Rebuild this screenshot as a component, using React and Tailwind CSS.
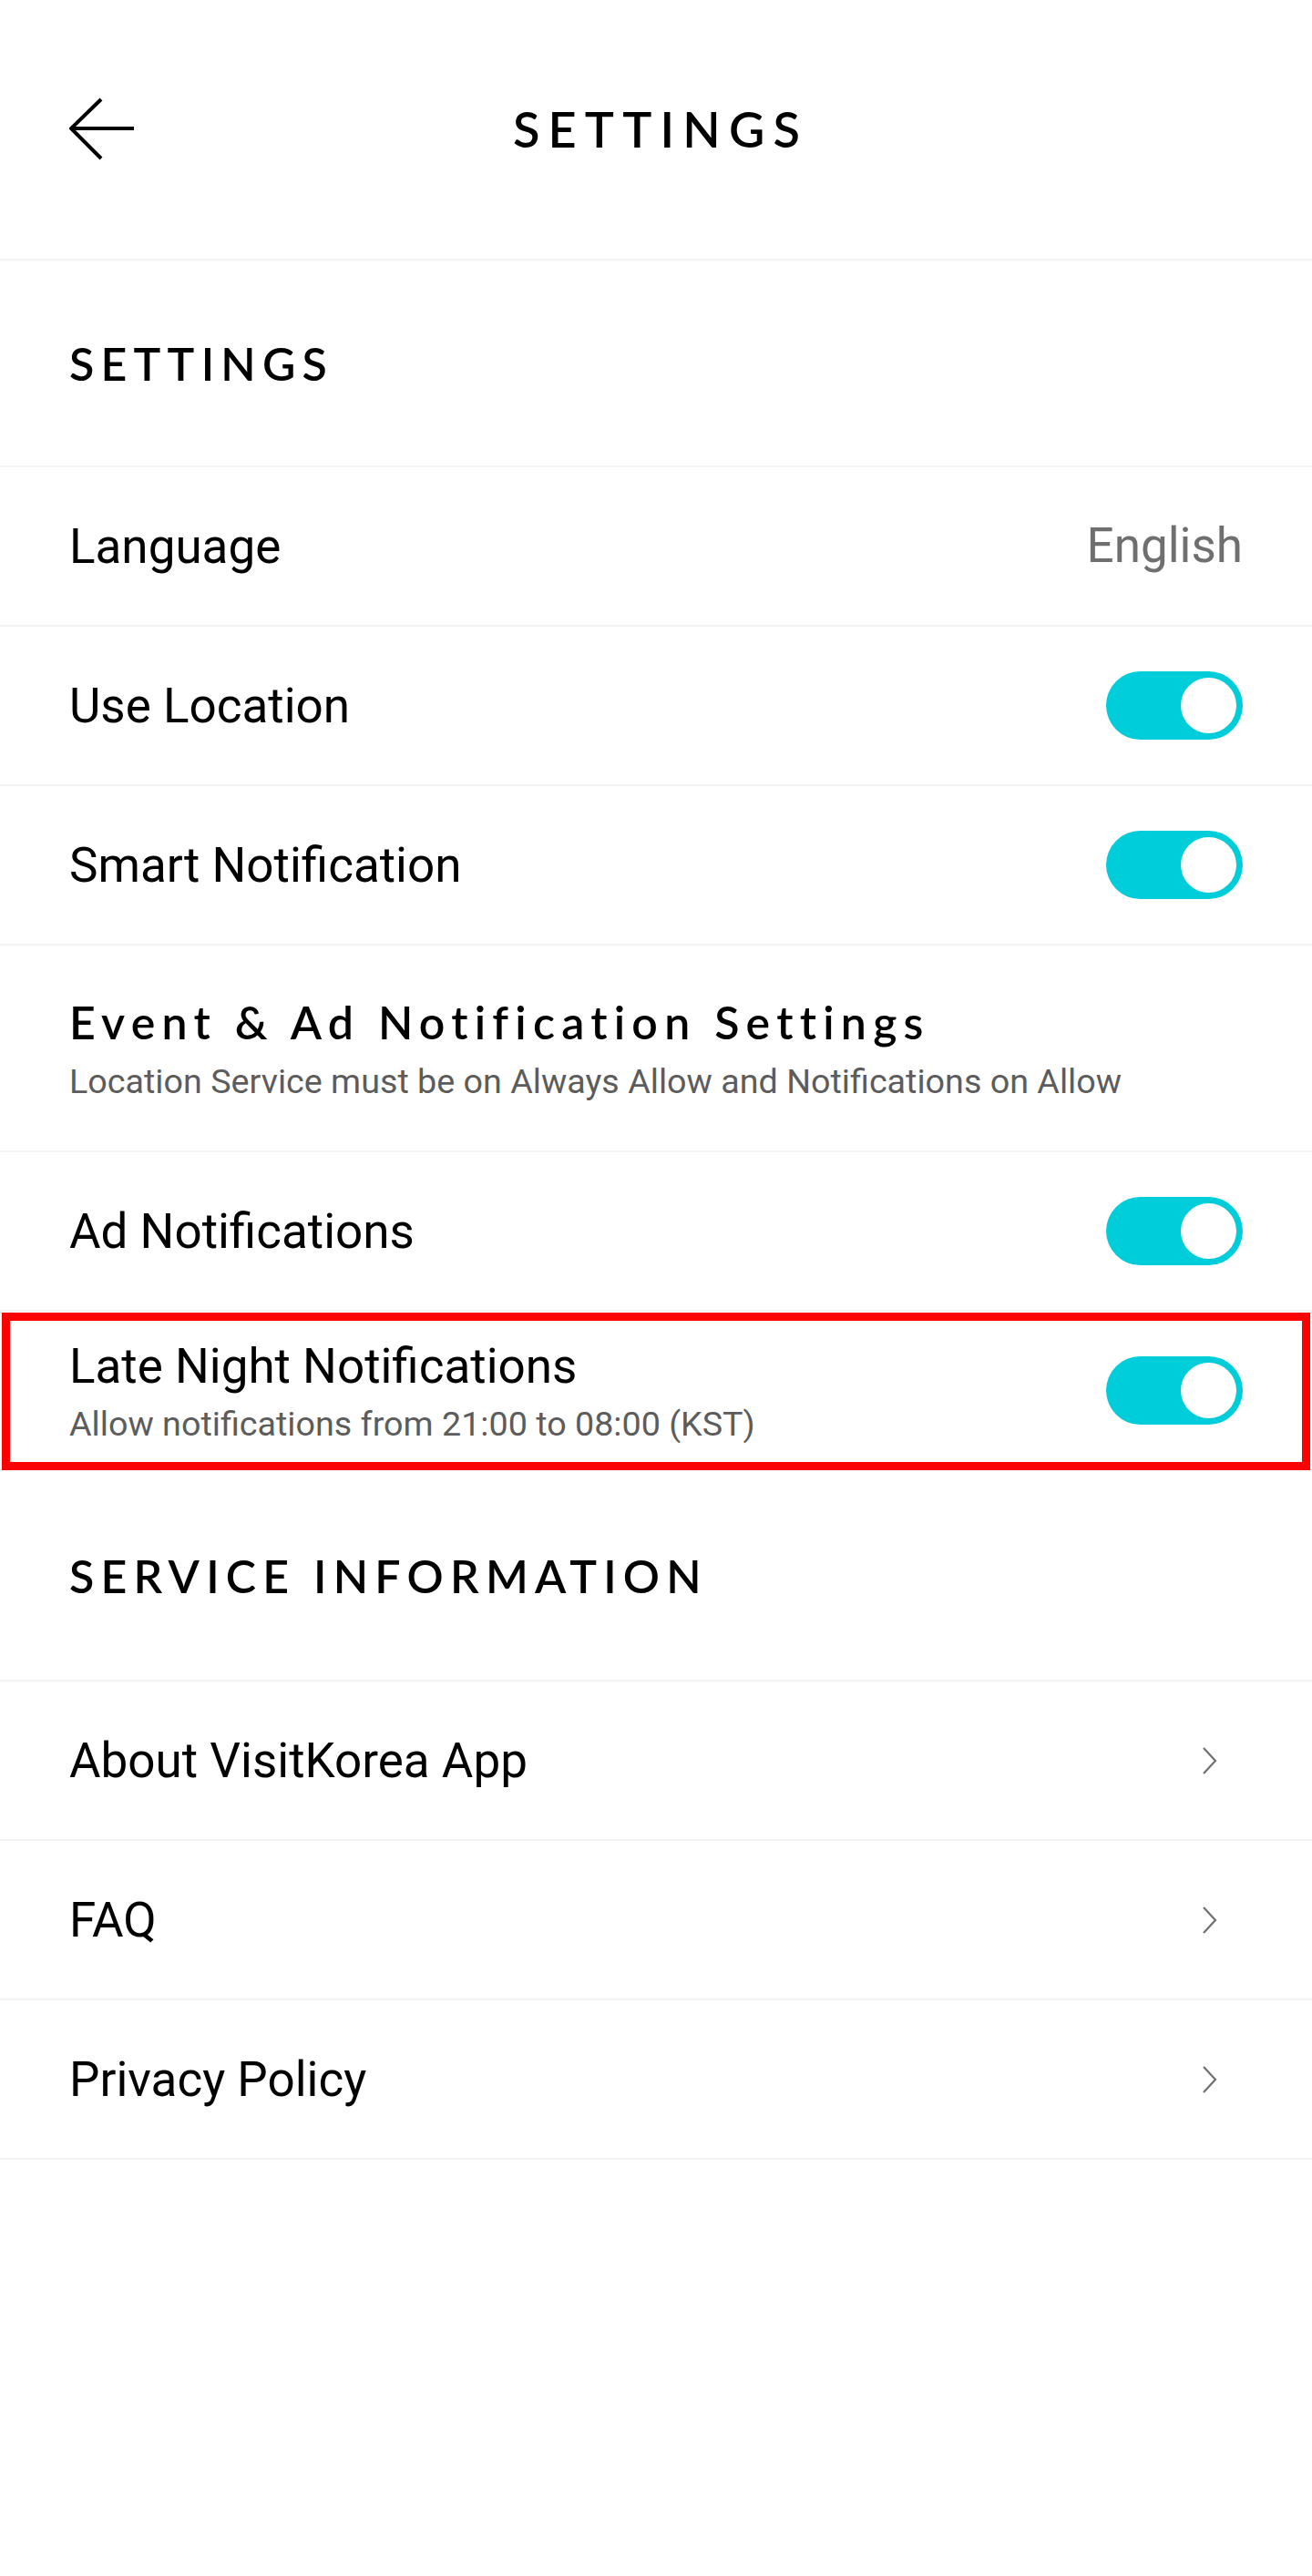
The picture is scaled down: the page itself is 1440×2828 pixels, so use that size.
import { useState } from "react";

const rowFont = { fontFamily: "Roboto, 'Noto Sans', sans-serif" };

function Toggle({ on, onChange }) {
  return (
    <button
      onClick={onChange}
      className={`relative h-[75px] w-[150px] shrink-0 rounded-full ${on ? "bg-[#00cdda]" : "bg-[#d5d5d5]"}`}
    >
      <span
        className={`absolute top-[7px] h-[61px] w-[61px] rounded-full bg-white ${on ? "right-[7px]" : "left-[7px]"}`}
      />
    </button>
  );
}

function Chevron() {
  return (
    <svg width="20" height="32" viewBox="0 0 20 32" className="mr-[28px] shrink-0">
      <path d="M5 2 L18 16 L5 30" fill="none" stroke="#707070" strokeWidth="2.2" />
    </svg>
  );
}

function SectionTitle({ children, sub }) {
  return (
    <div className="flex h-[227px] flex-col justify-center border-b-2 border-[#f3f3f3] px-[76px]">
      <h2 className="font-['Lato',sans-serif] text-[50px] font-semibold leading-[60px] tracking-[0.145em] text-black">
        {children}
      </h2>
      {sub && (
        <p style={rowFont} className="mt-[12px] text-[37.7px] leading-[46px] text-[#5c5c5c]">
          {sub}
        </p>
      )}
    </div>
  );
}

function Row({ label, sub, right, highlight }) {
  return (
    <div
      style={rowFont}
      className="relative flex h-[175px] items-center justify-between border-b-2 border-[#f3f3f3] px-[76px]"
    >
      <div className="flex flex-col">
        <span className="text-[53px] leading-[62px] text-black">{label}</span>
        {sub && <span className="mt-[10px] text-[37.7px] leading-[44px] text-[#5c5c5c]">{sub}</span>}
      </div>
      {right}
      {/* highlight frame */}
      {highlight && (
        <div className="pointer-events-none absolute inset-x-[2px] top-px bottom-[-1px] border-[9px] border-[#ff0000]" />
      )}
    </div>
  );
}

export default function App() {
  const [toggles, setToggles] = useState({
    location: true,
    smart: true,
    ad: true,
    lateNight: true,
  });

  const flip = (key) => setToggles((t) => ({ ...t, [key]: !t[key] }));

  return (
    <div className="min-h-screen bg-white">
      {/* Top bar */}
      <div className="relative flex h-[286px] items-center justify-center border-b-2 border-[#f3f3f3]">
        <button className="absolute left-[76px] top-[105px]">
          <svg width="72" height="72" viewBox="0 0 72 72">
            <path d="M2 36 H71 M35 4 L2 36 L35 69" fill="none" stroke="#000" strokeWidth="4" />
          </svg>
        </button>
        <h1 className="pl-[10px] font-['Lato',sans-serif] text-[54px] font-semibold leading-none tracking-[0.17em] text-black">
          SETTINGS
        </h1>
      </div>

      <SectionTitle>SETTINGS</SectionTitle>

      <Row
        label="Language"
        right={<span className="text-[53px] text-[#6f6f6f]">English</span>}
      />
      <Row label="Use Location" right={<Toggle on={toggles.location} onChange={() => flip("location")} />} />
      <Row label="Smart Notification" right={<Toggle on={toggles.smart} onChange={() => flip("smart")} />} />

      <SectionTitle sub="Location Service must be on Always Allow and Notifications on Allow">
        Event &amp; Ad Notification Settings
      </SectionTitle>

      <Row label="Ad Notifications" right={<Toggle on={toggles.ad} onChange={() => flip("ad")} />} />
      <Row
        label="Late Night Notifications"
        sub="Allow notifications from 21:00 to 08:00 (KST)"
        highlight
        right={<Toggle on={toggles.lateNight} onChange={() => flip("lateNight")} />}
      />

      <div className="flex h-[229px] items-center px-[76px]">
        <h2 className="font-['Lato',sans-serif] text-[50px] font-semibold leading-[60px] tracking-[0.145em] text-black">
          SERVICE INFORMATION
        </h2>
      </div>
      <div className="border-t-2 border-[#f3f3f3]">
        <Row label="About VisitKorea App" right={<Chevron />} />
        <Row label="FAQ" right={<Chevron />} />
        <Row label="Privacy Policy" right={<Chevron />} />
      </div>
    </div>
  );
}
